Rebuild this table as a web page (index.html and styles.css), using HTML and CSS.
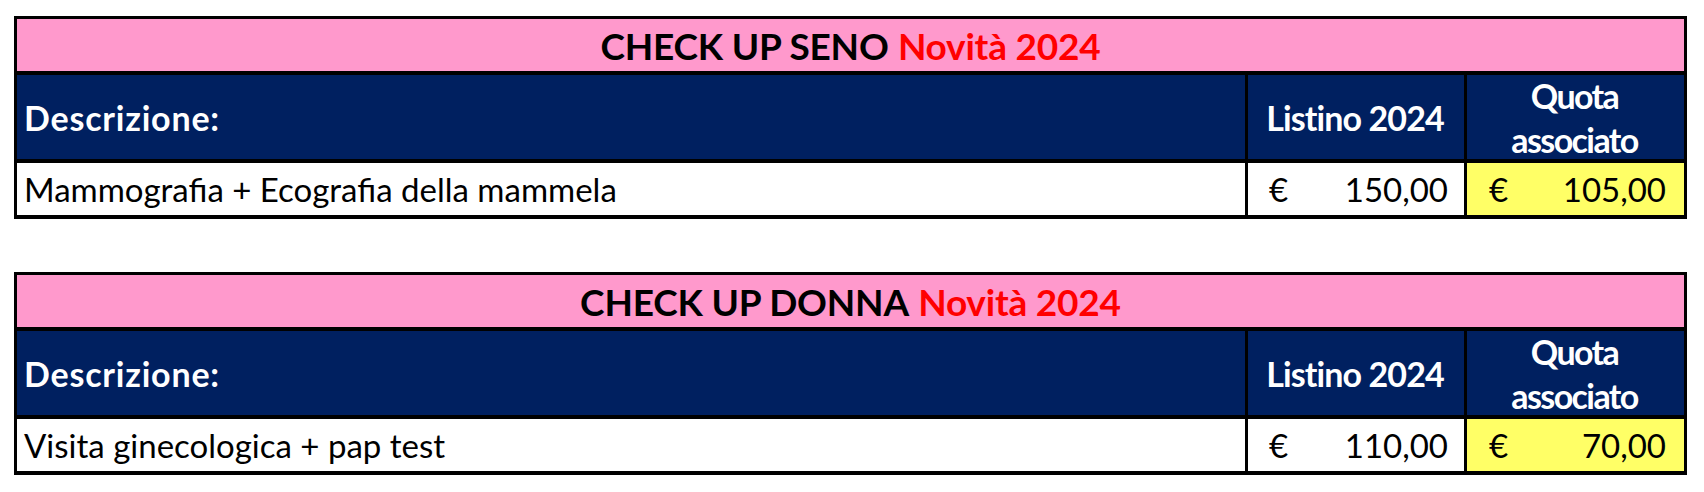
FILE: index.html
```html
<!DOCTYPE html>
<html lang="it">
<head>
<meta charset="utf-8">
<title>Check up</title>
<link rel="stylesheet" href="styles.css">
</head>
<body>
<div class="sheet">
  <div class="grid">
    <div class="title">CHECK UP SENO <span class="new">Novità 2024</span></div>
    <div class="head head-desc">Descrizione:</div>
    <div class="head head-center">Listino 2024</div>
    <div class="head head-center head-wrap">Quota<br>associato</div>
    <div class="cell desc">Mammografia + Ecografia della mammela</div>
    <div class="cell price"><span>€</span><span>150,00</span></div>
    <div class="cell price member"><span>€</span><span>105,00</span></div>
  </div>
  <div class="grid second">
    <div class="title">CHECK UP DONNA <span class="new">Novità 2024</span></div>
    <div class="head head-desc">Descrizione:</div>
    <div class="head head-center">Listino 2024</div>
    <div class="head head-center head-wrap">Quota<br>associato</div>
    <div class="cell desc">Visita ginecologica + pap test</div>
    <div class="cell price"><span>€</span><span>110,00</span></div>
    <div class="cell price member"><span>€</span><span>70,00</span></div>
  </div>
</div>
</body>
</html>
```
FILE: styles.css
```css
html, body {
  margin: 0;
  padding: 0;
  background: #ffffff;
}
body {
  font-family: Lato, "Liberation Sans", sans-serif;
  color: #000000;
}
.sheet {
  padding: 16px 0 0 14px;
}
.grid {
  width: 1673px;
  box-sizing: border-box;
  display: grid;
  grid-template-columns: 1228px 216px 217px;
  grid-template-rows: 52px 84px 52px;
  column-gap: 3px;
  row-gap: 4px;
  padding: 3px 3px 4px 3px;
  background: #000000;
}
.second {
  margin-top: 53px;
}
.title {
  grid-column: 1 / -1;
  background: #ff99cc;
  display: flex;
  align-items: center;
  justify-content: center;
  font-weight: bold;
  font-size: 37px;
  letter-spacing: -0.2px;
}
.new {
  color: #ff0000;
  margin-left: 0.25em;
}
.head {
  background: #002060;
  color: #ffffff;
  font-weight: bold;
  font-size: 34px;
  display: flex;
  align-items: center;
}
.head-desc {
  padding-left: 7px;
  letter-spacing: 0.8px;
}
.head-center {
  justify-content: center;
  text-align: center;
  letter-spacing: -0.9px;
  padding-right: 2px;
}
.head-wrap {
  line-height: 44px;
  padding-top: 2px;
  letter-spacing: -1.6px;
}
.cell {
  background: #ffffff;
  font-size: 33px;
  display: flex;
  align-items: center;
}
.desc {
  padding-left: 7px;
}
.price {
  justify-content: space-between;
  padding: 0 16px 0 21px;
}
.member {
  background: #ffff66;
  padding: 0 18px 0 22px;
}
```
